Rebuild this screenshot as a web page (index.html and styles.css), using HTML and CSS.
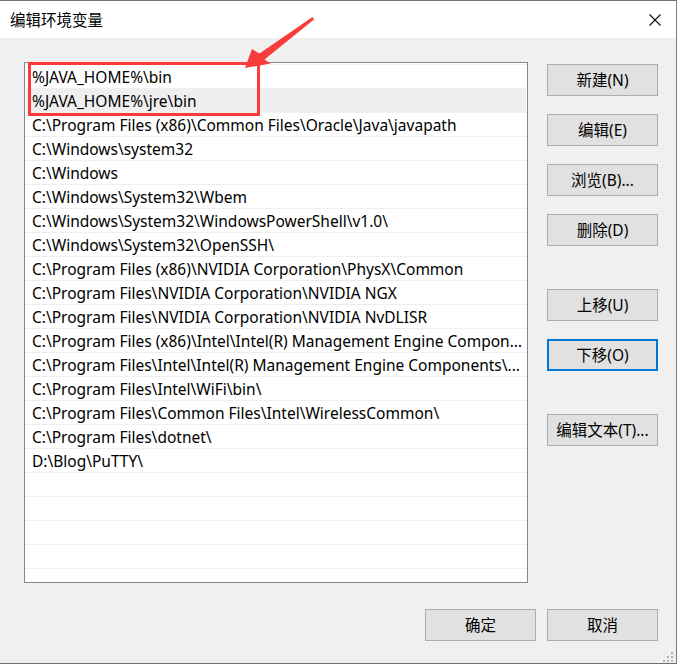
FILE: index.html
```html
<!DOCTYPE html>
<html lang="zh-CN">
<head>
<meta charset="utf-8">
<title>编辑环境变量</title>
<link rel="stylesheet" href="styles.css">
</head>
<body>
<div class="window">
  <div class="titlebar">
    <span class="title">编辑环境变量</span>
    <svg class="close" width="12" height="12" viewBox="0 0 12 12"><path d="M0.5 0.5 L11.5 11.5 M11.5 0.5 L0.5 11.5" stroke="#111" stroke-width="1.1" fill="none"/></svg>
  </div>
  <div class="body">
    <div class="main">
      <div class="list">
        <div class="row">%JAVA_HOME%\bin</div>
        <div class="row hover">%JAVA_HOME%\jre\bin</div>
        <div class="row">C:\Program Files (x86)\Common Files\Oracle\Java\javapath</div>
        <div class="row">C:\Windows\system32</div>
        <div class="row">C:\Windows</div>
        <div class="row">C:\Windows\System32\Wbem</div>
        <div class="row">C:\Windows\System32\WindowsPowerShell\v1.0\</div>
        <div class="row">C:\Windows\System32\OpenSSH\</div>
        <div class="row">C:\Program Files (x86)\NVIDIA Corporation\PhysX\Common</div>
        <div class="row">C:\Program Files\NVIDIA Corporation\NVIDIA NGX</div>
        <div class="row">C:\Program Files\NVIDIA Corporation\NVIDIA NvDLISR</div>
        <div class="row">C:\Program Files (x86)\Intel\Intel(R) Management Engine Compon...</div>
        <div class="row">C:\Program Files\Intel\Intel(R) Management Engine Components\...</div>
        <div class="row">C:\Program Files\Intel\WiFi\bin\</div>
        <div class="row">C:\Program Files\Common Files\Intel\WirelessCommon\</div>
        <div class="row">C:\Program Files\dotnet\</div>
        <div class="row">D:\Blog\PuTTY\</div>
        <div class="row"></div>
        <div class="row"></div>
        <div class="row"></div>
        <div class="row"></div>
        <div class="row"></div>
      </div>
      <div class="side">
        <div class="group">
          <button class="btn">新建(N)</button>
          <button class="btn">编辑(E)</button>
          <button class="btn">浏览(B)...</button>
          <button class="btn">删除(D)</button>
        </div>
        <div class="group">
          <button class="btn">上移(U)</button>
          <button class="btn focus">下移(O)</button>
        </div>
        <div class="group">
          <button class="btn">编辑文本(T)...</button>
        </div>
      </div>
    </div>
    <div class="footer">
      <button class="btn">确定</button>
      <button class="btn">取消</button>
    </div>
  </div>
  <div class="grip">
    <i></i><i></i><i></i><i></i><i></i><i></i>
  </div>
  <div class="mark"></div>
  <svg class="arrow" width="677" height="664" viewBox="0 0 677 664">
    <polygon points="245,68 252,49 259.5,53.5 312.5,17 314,19.5 264.5,59.5 270.5,63.5" fill="#f93b3b"/>
  </svg>
</div>
</body>
</html>
```
FILE: styles.css
```css
html, body {
  margin: 0;
  padding: 0;
  background: #f0f0f0;
}
body {
  font-family: "Noto Sans", "Noto Sans CJK SC", sans-serif;
  font-size: 15px;
  color: #000;
}
.window {
  position: relative;
  width: 677px;
  height: 664px;
  box-sizing: border-box;
  border-top: 1px solid #6f6f6f;
  border-right: 1px solid #7a7a7a;
  border-bottom: 1px solid #6f6f6f;
  background: #f0f0f0;
  display: flex;
  flex-direction: column;
  overflow: hidden;
}
.titlebar {
  height: 37px;
  flex: none;
  background: #fff;
  display: flex;
  align-items: center;
  justify-content: space-between;
  padding: 0 15px 0 10px;
}
.title {
  font-size: 15.5px;
  line-height: 20px;
  margin-top: 1px;
}
.close {
  display: block;
}
.body {
  flex: 1;
  display: flex;
  flex-direction: column;
  padding: 24px 18px 0 24px;
}
.main {
  display: flex;
  gap: 19px;
}
.list {
  width: 504px;
  height: 521px;
  box-sizing: border-box;
  border: 1px solid #828790;
  background: #fff;
  padding: 1px;
  overflow: hidden;
}
.row {
  height: 24px;
  box-sizing: border-box;
  border-top: 1px solid #efefef;
  font-size: 15.5px;
  line-height: 23px;
  padding: 1px 4px 0 6px;
  white-space: nowrap;
  overflow: hidden;
  text-overflow: ellipsis;
}
.row.hover {
  background: #efefef;
}
.side {
  width: 111px;
  padding-top: 2px;
  display: flex;
  flex-direction: column;
  gap: 43px;
}
.group {
  display: flex;
  flex-direction: column;
  gap: 18px;
}
.btn {
  width: 111px;
  height: 32px;
  box-sizing: border-box;
  border: 1px solid #adadad;
  background: #e1e1e1;
  font-family: inherit;
  font-size: 15.5px;
  color: #000;
  padding: 0;
  margin: 0;
  line-height: 20px;
}
.btn.focus {
  border: 2px solid #0078d7;
}
.footer {
  margin-top: 26px;
  display: flex;
  justify-content: flex-end;
  gap: 11px;
}
.grip {
  position: absolute;
  right: 3px;
  bottom: 1px;
  width: 10px;
  height: 10px;
  display: grid;
  grid-template-columns: repeat(3, 2px);
  grid-template-rows: repeat(3, 2px);
  gap: 2px;
}
.grip i {
  background: #b4b4b4;
}
.grip i:nth-child(1) { grid-column: 3; grid-row: 1; }
.grip i:nth-child(2) { grid-column: 2; grid-row: 2; }
.grip i:nth-child(3) { grid-column: 3; grid-row: 2; }
.grip i:nth-child(4) { grid-column: 1; grid-row: 3; }
.grip i:nth-child(5) { grid-column: 2; grid-row: 3; }
.grip i:nth-child(6) { grid-column: 3; grid-row: 3; }
.mark {
  position: absolute;
  left: 28px;
  top: 61px;
  width: 232px;
  height: 54px;
  box-sizing: border-box;
  border: 3px solid #f93b3b;
}
.arrow {
  position: absolute;
  left: 0;
  top: -1px;
  pointer-events: none;
}
```
